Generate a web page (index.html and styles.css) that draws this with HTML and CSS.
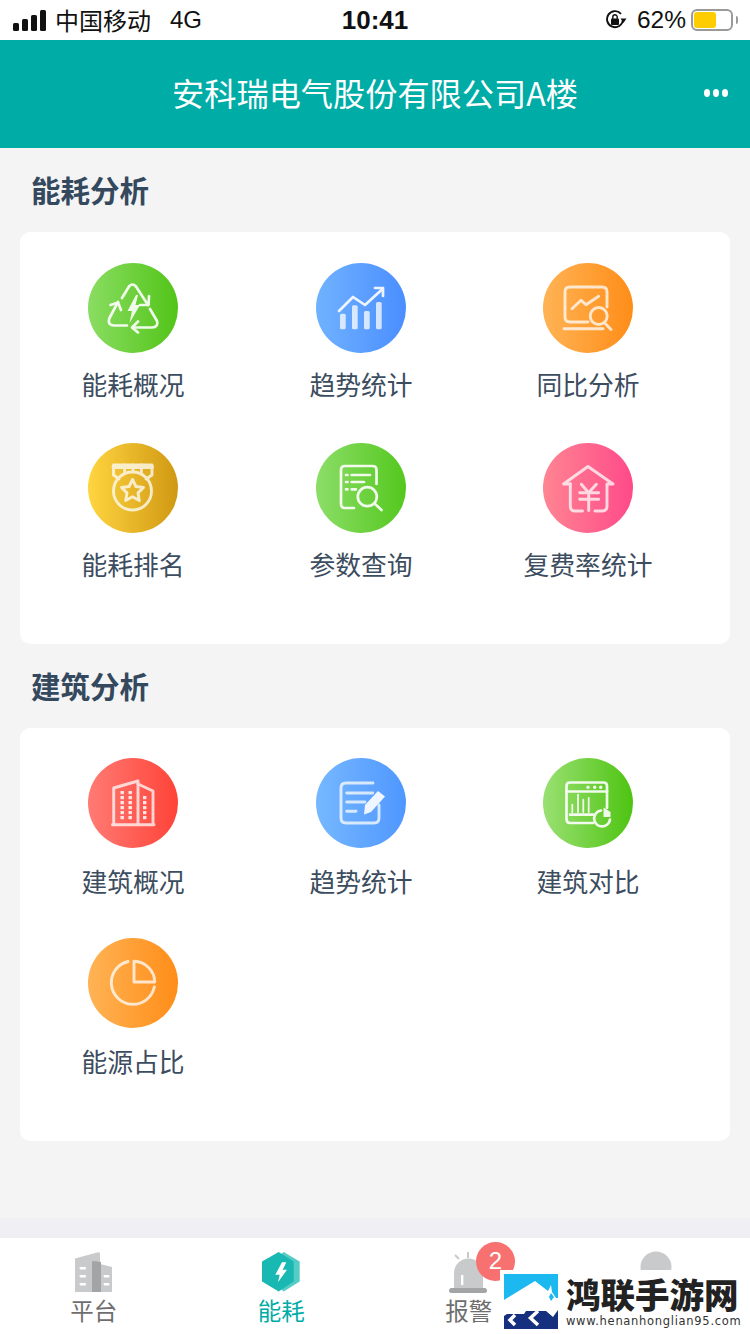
FILE: index.html
```html
<!DOCTYPE html>
<html lang="zh-CN">
<head>
<meta charset="utf-8">
<title>能耗</title>
<link rel="stylesheet" href="styles.css">
</head>
<body>
<div class="app">
  <div class="status">
    <div class="status-left">
      <svg class="signal" viewBox="0 0 33 21"><rect x="0" y="13" width="6" height="8" rx="1.5"/><rect x="9" y="9" width="6" height="12" rx="1.5"/><rect x="18" y="5" width="6" height="16" rx="1.5"/><rect x="27" y="0" width="6" height="21" rx="1.5"/></svg>
      <span class="carrier">中国移动</span><span class="net">4G</span>
    </div>
    <div class="clock">10:41</div>
    <div class="status-right">
      <svg class="lock" viewBox="0 0 22 20"><path d="M16 3.8A8 8 0 1 0 18 10" fill="none" stroke="#111" stroke-width="1.9"/><path d="M15.5 8.5H21.5L18.5 13Z" fill="#111"/><rect x="6" y="8.5" width="8" height="6.5" rx="1" fill="#111"/><path d="M7.8 9V7a2.2 2.2 0 0 1 4.4 0v2" fill="none" stroke="#111" stroke-width="1.4"/></svg>
      <span class="pct">62%</span>
      <div class="battery"><div class="battery-fill"></div></div>
      <div class="battery-nub"></div>
    </div>
  </div>

  <header class="header">
    <div></div>
    <h1 class="header-title">安科瑞电气股份有限公司A楼</h1>
    <div class="more"><i></i><i></i><i></i></div>
  </header>

  <main class="main">
    <h2 class="section-title">能耗分析</h2>
    <section class="card card-energy">
      <div class="item">
        <div class="disc g-green">
          <svg class="glyph" viewBox="0 0 90 90"><g class="ln"><path d="M30 39L21.5 55Q19 62 26 62.5L39 62.5"/><path d="M22.5 42L30 39.5L33 47"/><path d="M34 35L41 23.5Q44.5 19.5 48 23.5L60 42"/><path d="M52 42L60.5 42L61 33"/><path d="M62 46L69 58Q70.5 64 64 64.5L45 64.5"/><path d="M50 58.5L44 64.5L50 69.5"/></g><path class="fl" d="M48 32L39.5 48H44L41.5 60L52 42H47.5L50 32Z"/></svg>
        </div>
        <div class="label">能耗概况</div>
      </div>
      <div class="item">
        <div class="disc g-blue">
          <svg class="glyph" viewBox="0 0 90 90"><g class="bars"><rect x="24" y="50.7" width="5.7" height="15.6" rx="1.5"/><rect x="36" y="42.3" width="5.7" height="24" rx="1.5"/><rect x="48" y="48" width="5.7" height="18.3" rx="1.5"/><rect x="60" y="39" width="5.7" height="27.3" rx="1.5"/></g><g class="ln"><path d="M23 48L37 34L49 42L66.5 26"/><path d="M59 25H67V33"/></g></svg>
        </div>
        <div class="label">趋势统计</div>
      </div>
      <div class="item">
        <div class="disc g-orange">
          <svg class="glyph soft" viewBox="0 0 90 90"><g class="ln"><path d="M45 59H27Q22 59 22 54V29Q22 24 27 24H59Q64 24 64 29V44"/><path d="M29 45.7L38 37.3L43 41.7L55.7 33.3"/><circle cx="55.7" cy="53" r="8.5"/><path d="M61.7 60L68 66.5"/><path d="M21 65.7H60"/></g></svg>
        </div>
        <div class="label">同比分析</div>
      </div>
      <div class="item">
        <div class="disc g-gold">
          <svg class="glyph soft" viewBox="0 0 90 90"><g class="ln"><path d="M31 36L25.5 32V22H64V32L58 36"/><path d="M25.5 24H64" stroke-width="4"/><path d="M36.7 22V30M45 22V28M53.3 22V30"/><circle cx="44.5" cy="48" r="19"/><path d="M44.5 36.5L47.9 43.5L55.5 44.5L50 49.9L51.3 57.5L44.5 53.8L37.7 57.5L39 49.9L33.5 44.5L41.1 43.5Z"/></g></svg>
        </div>
        <div class="label">能耗排名</div>
      </div>
      <div class="item">
        <div class="disc g-green2">
          <svg class="glyph" viewBox="0 0 90 90"><g class="ln"><path d="M38 65H29Q25 65 25 61V27Q25 23 29 23H56.5Q60.5 23 60.5 27V41"/><path d="M35.7 32H54M35.7 39H48M35.7 46.3H40"/><path d="M30 32H31.5M30 39H31.5M30 46.3H31.5"/><circle cx="51.3" cy="53.7" r="9.5"/><path d="M58.5 60.5L65.5 67"/></g></svg>
        </div>
        <div class="label">参数查询</div>
      </div>
      <div class="item">
        <div class="disc g-pink">
          <svg class="glyph soft" viewBox="0 0 90 90"><g class="ln"><path d="M27.3 41H20.5L45 23.5L70 41H64V63Q64 68 59 68H52"/><path d="M27.3 41V63Q27.3 68 32 68H39.5"/><path d="M38.3 41.3L45.7 49.7L53.3 41.3"/><path d="M36.7 49.7H55.7M36.7 56.3H55.7M45.7 49.7V67.5"/></g></svg>
        </div>
        <div class="label">复费率统计</div>
      </div>
    </section>

    <h2 class="section-title">建筑分析</h2>
    <section class="card card-building">
      <div class="item">
        <div class="disc g-red">
          <svg class="glyph soft" viewBox="0 0 90 90"><g class="ln"><path d="M25.7 66.7V30L50 23V66.7"/><path d="M50 26L65 33V66.7"/><path d="M24.5 66.7H66"/></g><g class="win"><rect x="32.5" y="33" width="3.4" height="3.2"/><rect x="40.5" y="33" width="3.4" height="3.2"/><rect x="32.5" y="38" width="3.4" height="3.2"/><rect x="40.5" y="38" width="3.4" height="3.2"/><rect x="32.5" y="43" width="3.4" height="3.2"/><rect x="40.5" y="43" width="3.4" height="3.2"/><rect x="32.5" y="48" width="3.4" height="3.2"/><rect x="40.5" y="48" width="3.4" height="3.2"/><rect x="32.5" y="53" width="3.4" height="3.2"/><rect x="40.5" y="53" width="3.4" height="3.2"/><rect x="32.5" y="58" width="3.4" height="3.2"/><rect x="40.5" y="58" width="3.4" height="3.2"/><rect x="55" y="38" width="3.4" height="3.2"/><rect x="55" y="43" width="3.4" height="3.2"/><rect x="55" y="48" width="3.4" height="3.2"/><rect x="55" y="53" width="3.4" height="3.2"/><rect x="55" y="58" width="3.4" height="3.2"/></g></svg>
        </div>
        <div class="label">建筑概况</div>
      </div>
      <div class="item">
        <div class="disc g-blue2">
          <svg class="glyph soft" viewBox="0 0 90 90"><g class="ln"><path d="M57 25H30Q25 25 25 30V60Q25 65 30 65H58Q63 65 63 60V47"/><path d="M30.7 35H56.7M30.7 44H49M30.7 53.3H40"/></g><path class="fl" d="M62 33L69 38.5L55 54L48 56.5L49 47Z"/></svg>
        </div>
        <div class="label">趋势统计</div>
      </div>
      <div class="item">
        <div class="disc g-green3">
          <svg class="glyph" viewBox="0 0 90 90"><g class="ln"><path d="M50 65H27Q23.5 65 23.5 61V28Q23.5 24.5 27 24.5H60.5Q64 24.5 64 28V50"/><path d="M23.5 33.5H64"/><path d="M27 56.7H50"/><path d="M29.3 46.7V54M35 36.7V54M40.3 41.7V54M45.7 40V54" stroke-width="1.8"/><path d="M58 52.5A8 8 0 1 0 67 61.5"/></g><path class="fl" d="M60.5 49.5L67.5 54L67.5 59H60.5Z"/><g class="fl"><circle cx="45" cy="29.3" r="1.7"/><circle cx="51.7" cy="29.3" r="1.7"/><circle cx="57.7" cy="29.3" r="1.7"/></g></svg>
        </div>
        <div class="label">建筑对比</div>
      </div>
      <div class="item">
        <div class="disc g-orange">
          <svg class="glyph soft" viewBox="0 0 90 90"><g class="ln"><path d="M40 23.5A21.7 21.7 0 1 0 66.3 49"/><path d="M46 23.3V44H66.7A21 21 0 0 0 46 23.3Z"/></g></svg>
        </div>
        <div class="label">能源占比</div>
      </div>
    </section>
  </main>

  <div class="band"></div>

  <nav class="tabbar">
    <div class="tab">
      <svg class="tab-icon" width="38" height="42" viewBox="0 0 38 42"><path d="M0 7.5L23 1.2Q25 0.8 25 3V41H0Z" fill="#C9CACC"/><path d="M17 11L37 16V41H17Z" fill="#C9CACC"/><path d="M17 11Q17 10 19 10L26 11V41H17Z" fill="#A3A4A6"/><g fill="#fff"><rect x="4.5" y="16" width="6.5" height="2.6" rx="1"/><rect x="4.5" y="24" width="6.5" height="2.6" rx="1"/><rect x="4.5" y="32" width="6.5" height="2.6" rx="1"/><rect x="28.5" y="24" width="6" height="2.6" rx="1"/><rect x="28.5" y="32" width="6" height="2.6" rx="1"/></g></svg>
      <span class="tab-label">平台</span>
    </div>
    <div class="tab tab-active">
      <svg class="tab-icon" width="38" height="42" viewBox="0 0 38 41"><path d="M21.7 0.5L37.7 10V30L21.7 40L10 30V10Z" fill="#55CCC6"/><path d="M16.7 0.5L31.7 10V30L16.7 40L0 30V10Z" fill="#19B8B3"/><path d="M20 10.7L13.3 23.3H17.7L16 30.7L25 18.3H20.7L24.3 10.7Z" fill="#fff"/></svg>
      <span class="tab-label">能耗</span>
    </div>
    <div class="tab">
      <svg class="tab-icon" width="42" height="42" viewBox="0 0 42 42"><path d="M6 37V22a14.5 14.5 0 0 1 29 0V37Z" fill="#C9CACC"/><rect x="1" y="37" width="38" height="5" rx="2.5" fill="#A3A4A6"/><rect x="13" y="24" width="2.4" height="10" fill="#fff"/><path d="M7 4l4 4M20 1v6" stroke="#C9CACC" stroke-width="2"/></svg>
      <span class="tab-label">报警</span>
      <span class="badge">2</span>
    </div>
    <div class="tab">
      <svg class="tab-icon" width="42" height="42" viewBox="0 0 42 42"><circle cx="21" cy="16" r="15.5" fill="#C9CACC"/><path d="M3 42a18 14 0 0 1 36 0Z" fill="#C9CACC"/></svg>
    </div>
  </nav>

  <div class="watermark">
    <svg class="wm-logo" viewBox="0 0 54 55"><rect width="54" height="55" fill="#1CB8F0"/><path d="M0 26L31 7L44 17L47 11L48 18L52 24H54V55H0Z" fill="#fff"/><path d="M47 19L50 23L47 27L45 23Z" fill="#1CB8F0"/><path d="M0 55V42L3 40H20L22 37H42L49 43L54 36V55Z" fill="#14307F"/><path d="M11 41L6 46L11 51M34 37L26.5 44L34 51" fill="none" stroke="#fff" stroke-width="3.5"/></svg>
    <div class="wm-text">
      <div class="wm-name">鸿联手游网</div>
      <div class="wm-url">www.henanhonglian95.com</div>
    </div>
  </div>
</div>
</body>
</html>
```

FILE: styles.css
```css
* { box-sizing: border-box; }
html, body { margin: 0; padding: 0; }
body { font-family: "Noto Sans CJK SC", "Liberation Sans", sans-serif; background: #fff; }
h1, h2 { margin: 0; }

.app { position: relative; width: 750px; height: 1334px; display: flex; flex-direction: column; overflow: hidden; background: #F4F4F4; }

.status { height: 40px; background: #fff; display: grid; grid-template-columns: 1fr auto 1fr; align-items: center; color: #111; flex: none; }
.status-left { display: flex; align-items: center; padding-left: 13px; }
.signal { width: 33px; height: 21px; fill: #111; margin-right: 9px; }
.carrier { font-size: 24px; line-height: 38px; margin-right: 19px; }
.net { font-size: 24px; line-height: 40px; font-family: "Liberation Sans", sans-serif; }
.clock { font-size: 26px; font-weight: 700; font-family: "Liberation Sans", sans-serif; line-height: 40px; }
.status-right { display: flex; align-items: center; justify-content: flex-end; padding-right: 12px; }
.lock { width: 22px; height: 20px; margin-right: 10px; }
.pct { font-size: 24.5px; font-family: "Liberation Sans", sans-serif; margin-right: 5px; line-height: 40px; }
.battery { width: 42px; height: 22px; border: 2px solid #9A9A9A; border-radius: 6px; padding: 1px 1px; background: #fff; }
.battery-fill { width: 22px; height: 100%; background: #FFCC00; border-radius: 3px; }
.battery-nub { width: 2px; height: 8px; background: #9A9A9A; border-radius: 0 2px 2px 0; margin-left: 3px; }

.header { height: 108px; flex: none; background: #00ACA6; display: grid; grid-template-columns: 1fr auto 1fr; align-items: center; color: #fff; }
.header-title { font-size: 32.2px; font-weight: 400; line-height: 44px; padding-bottom: 5px; height: 49px; }
.more { display: flex; justify-content: flex-end; gap: 2.5px; padding-right: 22px; padding-bottom: 3px; }
.more i { width: 6.5px; height: 8px; border-radius: 50%; background: #fff; }

.main { flex: 1; min-height: 0; }
.section-title { font-size: 29.5px; font-weight: 700; line-height: 40px; padding: 21px 0 23px 31px; color: #34495E; }
.card { margin: 0 20px; background: #fff; border-radius: 10px; display: grid; grid-template-columns: 226px 230px 224px; justify-content: start; }
.card-energy { height: 412px; padding-top: 31px; grid-auto-rows: 179.5px; }
.card-building { height: 413px; padding-top: 30px; grid-auto-rows: 180px; }
.card-building .label { margin-top: 13px; }

.item { display: flex; flex-direction: column; align-items: center; }
.disc { width: 90px; height: 90px; border-radius: 50%; flex: none; }
.glyph { display: block; width: 90px; height: 90px; }
.label { margin-top: 11px; font-size: 25.8px; line-height: 40px; color: #3C4D60; white-space: nowrap; }

.g-green { background: linear-gradient(90deg, #8ADD62, #52C418); }
.g-blue { background: linear-gradient(90deg, #70B2FF, #4A8EFF); }
.g-orange { background: linear-gradient(90deg, #FFB355, #FF8D18); }
.g-gold { background: linear-gradient(90deg, #FFD540, #D09812); }
.g-green2 { background: linear-gradient(90deg, #8CDD68, #54C81D); }
.g-pink { background: linear-gradient(90deg, #FF8592, #FF4A8A); }
.g-red { background: linear-gradient(90deg, #FF7B74, #FF4338); }
.g-blue2 { background: linear-gradient(90deg, #76B8FF, #4F97FF); }
.g-green3 { background: linear-gradient(90deg, #9AE072, #4EC412); }

.ln { fill: none; stroke: #fff; stroke-width: 2.7; stroke-linecap: round; stroke-linejoin: round; opacity: .9; }
.fl { fill: #fff; opacity: .9; }
.bars { fill: #fff; opacity: .75; }
.win { fill: #fff; opacity: .85; }
.soft .ln { opacity: .75; stroke-width: 2.9; }

.band { height: 20px; flex: none; background: #EFEFF4; }
.tabbar { height: 96px; flex: none; background: #fff; display: grid; grid-template-columns: repeat(4, 187.5px); }
.tab { position: relative; display: flex; flex-direction: column; align-items: center; padding-top: 13px; color: #6E6E6E; }
.tab-active { color: #00ACA6; }
.tab-icon { display: block; flex: none; }
.tab-label { font-size: 23.5px; line-height: 30px; margin-top: 2px; }
.badge { position: absolute; left: 101px; top: 4px; width: 39px; height: 39px; border-radius: 50%; background: #F87171; color: #fff; font-size: 24px; line-height: 37px; text-align: center; font-family: "Liberation Sans", sans-serif; }

.watermark { position: absolute; left: 500px; top: 1270px; width: 250px; height: 64px; background: #fff; display: flex; align-items: flex-start; padding: 4px 0 0 4px; }
.wm-logo { width: 54px; height: 55px; flex: none; margin-right: 8px; }
.wm-text { display: flex; flex-direction: column; }
.wm-name { font-size: 34.5px; font-weight: 900; line-height: 38px; color: #222; white-space: nowrap; }
.wm-url { font-family: "DejaVu Sans", sans-serif; font-size: 11.5px; line-height: 18px; letter-spacing: .7px; color: #333; white-space: nowrap; }
```
